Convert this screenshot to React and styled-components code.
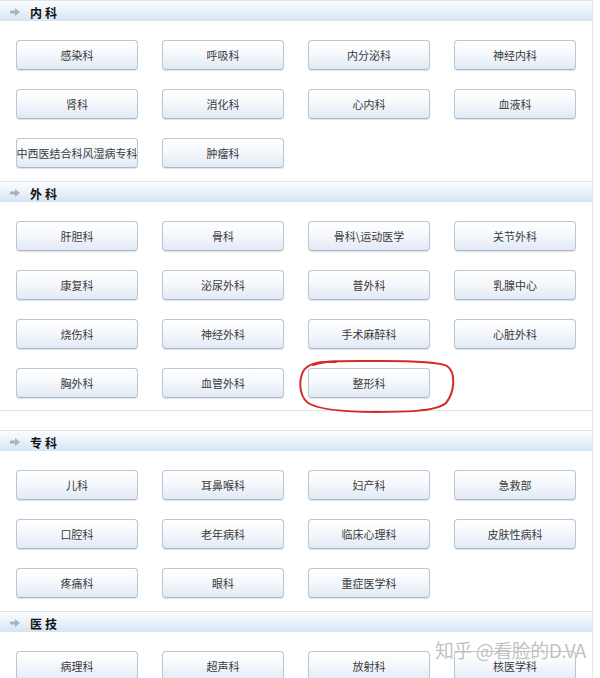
import React from "react";
import styled, { createGlobalStyle } from "styled-components";

const GlobalStyle = createGlobalStyle`
  html, body {
    margin: 0;
    padding: 0;
    background: #fff;
    overflow: hidden;
  }
  body {
    font-family: "Noto Sans CJK SC", "Liberation Sans", sans-serif;
  }
`;

const Page = styled.div`
  position: relative;
  width: 600px;
  height: 678px;
  overflow: hidden;
  background: #fff;
`;

const Panel = styled.div`
  width: 592px;
  min-height: 678px;
  border-right: 1px solid #e6e6e6;
`;

const Section = styled.div`
  border-bottom: ${(p) => (p.$closed ? "1px solid #e4e4e4" : "none")};
  margin-bottom: ${(p) => (p.$closed ? "19px" : "0")};
`;

const Header = styled.div`
  height: 21px;
  border-top: 1px solid #dfe3e8;
  background: linear-gradient(#fbfcfe, #eef4fb 40%, #d5e4f4);
  display: flex;
  align-items: center;
  padding-left: 10px;
  padding-top: 2px;
  box-sizing: border-box;
`;

const Arrow = styled.svg`
  width: 10px;
  height: 8px;
  margin-right: 10px;
`;

const Title = styled.span`
  font-size: 12px;
  font-weight: bold;
  color: #111;
  letter-spacing: 3px;
`;

const Grid = styled.div`
  display: grid;
  grid-template-columns: repeat(4, 122px);
  column-gap: 24px;
  row-gap: 19px;
  padding: 19px 0 ${(p) => (p.$closed ? "12px" : "13px")} 16px;
`;

const Btn = styled.div`
  height: 30px;
  box-sizing: border-box;
  border: 1px solid #b9c6d4;
  border-bottom-color: #a9b7c6;
  border-radius: 4px;
  background: linear-gradient(#ffffff, #f5f8fc 45%, #e1eaf5);
  box-shadow: 0 1px 1px rgba(120, 140, 165, 0.25);
  display: flex;
  align-items: center;
  justify-content: center;
  font-size: 11px;
  color: #3a3a3a;
  white-space: nowrap;
  overflow: hidden;
`;

const Watermark = styled.div`
  position: absolute;
  left: 435px;
  top: 636px;
  font-size: 19px;
  color: rgba(140, 140, 140, 0.55);
  white-space: nowrap;
  letter-spacing: -0.5px;
  text-shadow: 0 0 1px rgba(255, 255, 255, 0.9);
`;

const Ring = styled.svg`
  position: absolute;
  left: 0;
  top: 0;
  pointer-events: none;
`;

const sections = [
  {
    title: "内科",
    items: ["感染科", "呼吸科", "内分泌科", "神经内科", "肾科", "消化科", "心内科", "血液科", "中西医结合科风湿病专科", "肿瘤科"],
  },
  {
    title: "外科",
    closed: true,
    items: ["肝胆科", "骨科", "骨科\\运动医学", "关节外科", "康复科", "泌尿外科", "普外科", "乳腺中心", "烧伤科", "神经外科", "手术麻醉科", "心脏外科", "胸外科", "血管外科", "整形科"],
  },
  {
    title: "专科",
    items: ["儿科", "耳鼻喉科", "妇产科", "急救部", "口腔科", "老年病科", "临床心理科", "皮肤性病科", "疼痛科", "眼科", "重症医学科"],
  },
  {
    title: "医技",
    items: ["病理科", "超声科", "放射科", "核医学科"],
  },
];

const App = () => {
  return (
    <Page>
      <GlobalStyle />
      <Panel>
        {sections.map((s) => (
          <Section key={s.title} $closed={s.closed}>
            <Header>
              <Arrow viewBox="0 0 10 8">
                <path d="M0 2.5h5V0l5 4-5 4V5.5H0z" fill="#a9b4c0" />
              </Arrow>
              <Title>{s.title}</Title>
            </Header>
            <Grid $closed={s.closed}>
              {s.items.map((it) => (
                <Btn key={it}>{it}</Btn>
              ))}
            </Grid>
          </Section>
        ))}
      </Panel>
      <Ring width="600" height="678">
        <path
          d="M313 365 C330 360 347 361 380 361 C410 361 440 362 447 366 C456 372 455 392 446 403 C436 412 400 412 375 412 C345 412 320 410 308 403 C298 395 299 378 304 370 C310 362 322 361 336 362"
          fill="none"
          stroke="#d42a2a"
          strokeWidth="2"
          strokeLinecap="round"
        />
      </Ring>
      <Watermark>知乎 @看脸的D.VA</Watermark>
    </Page>
  );
};

export default App;
